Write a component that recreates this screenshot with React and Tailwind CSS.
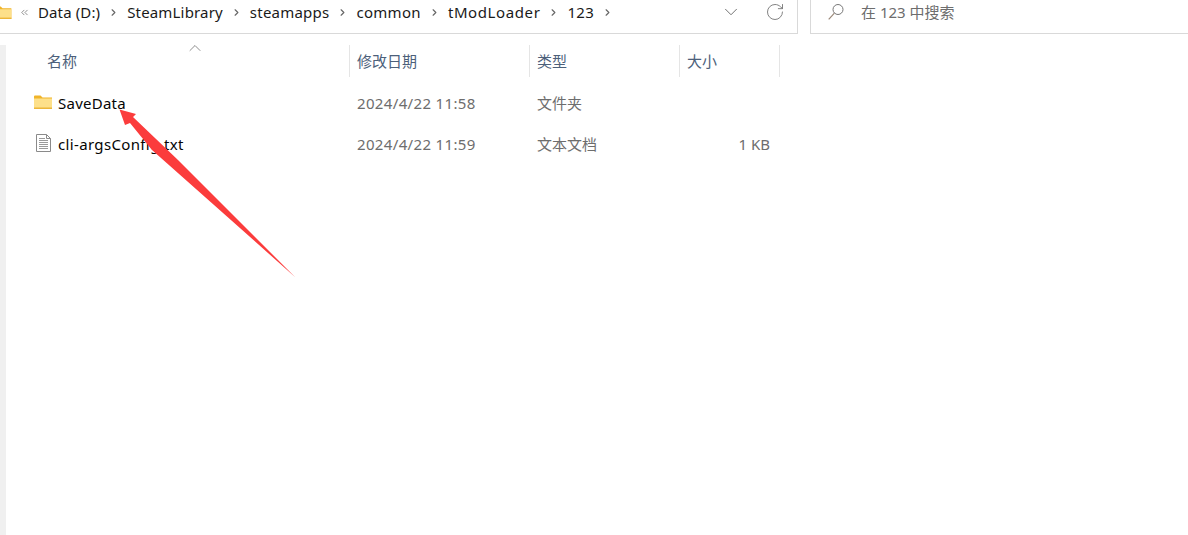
import { ChevronDown, ChevronRight, ChevronUp, ChevronsLeft, RotateCw } from 'lucide-react';

const font = 'font-["Noto_Sans","Noto_Sans_CJK_SC",sans-serif]';
const crumbs = [
  { label: 'Data (D:)', cls: 'tracking-[0.12px]' },
  { label: 'SteamLibrary', cls: 'tracking-[0.17px]' },
  { label: 'steamapps', cls: 'tracking-[0.22px]' },
  { label: 'common', cls: 'tracking-[0.3px]' },
  { label: 'tModLoader', cls: 'tracking-[0.6px]' },
  { label: '123', cls: 'tracking-[0.3px]' },
];

function FolderIcon({ className }) {
  return (
    <svg className={className} viewBox="0 0 18 14">
      <path d="M0 1.5 Q0 0.5 1 0.5 H6.5 L8.5 2.5 H18 V14 H0 Z" fill="#f0b429" />
      <rect x="0" y="3.5" width="18" height="10.5" fill="#fde08a" />
      <rect x="0" y="12.5" width="18" height="1.5" fill="#ecb63a" />
    </svg>
  );
}

function FileIcon({ className }) {
  return (
    <svg className={className} viewBox="0 0 15 18" fill="none">
      <path d="M0.5 0.5 H10.5 L14.5 4.5 V17.5 H0.5 Z" fill="#fff" stroke="#8a8a8a" />
      <path d="M10.5 0.5 V4.5 H14.5" stroke="#8a8a8a" />
      <path d="M3 4.5 H9 M3 6.5 H12 M3 8.5 H12 M3 10.5 H12 M3 12.5 H12 M3 14.5 H12" stroke="#9a9a9a" />
    </svg>
  );
}

function SearchIcon({ className }) {
  return (
    <svg className={className} viewBox="0 0 16 16" fill="none" stroke="#777" strokeWidth="1">
      <circle cx="10" cy="5.5" r="5" />
      <path d="M6.4 9.2 L0.7 15.3" stroke="#9a8878" strokeWidth="1.2" />
    </svg>
  );
}

function Row({ icon, name, nameCls, date, type, size }) {
  return (
    <div className="grid h-[41px] grid-cols-[342px_180px_150px_101px] items-center text-[15px] text-[#6d6d6d]">
      <div className="flex items-center pl-[27px]">
        {icon}
        <span className={`text-[#050505] ${nameCls}`}>{name}</span>
      </div>
      <span className="pl-[8px] tracking-[0.35px]">{date}</span>
      <span className="pl-[8px]">{type}</span>
      <span className="pr-[10px] text-right">{size}</span>
    </div>
  );
}

export default function App() {
  return (
    <div className={`relative flex h-[535px] w-[1188px] flex-col overflow-hidden bg-white ${font}`}>
      {/* barra de direccion y busqueda */}
      <div className="flex h-[34px] shrink-0 gap-[12px]">
        <div className="flex w-[798px] items-center border-r border-b border-[#d9d9d9] pb-[9px] text-[15px] text-[#1a1a1a]">
          <FolderIcon className="ml-[-6px] h-[13px] w-[18px]" />
          <ChevronsLeft className="ml-[7px] h-[11px] w-[11px] text-[#777]" strokeWidth={1.75} />
          <div className="ml-[8px] flex items-center gap-[8px]">
            {crumbs.map((c) => (
              <div key={c.label} className="flex items-center gap-[8px]">
                <span className={c.cls}>{c.label}</span>
                <ChevronRight className="h-[11px] w-[11px] text-[#666]" strokeWidth={2.5} />
              </div>
            ))}
          </div>
          <ChevronDown className="mr-[-1px] ml-auto h-[22px] w-[22px] text-[#666]" strokeWidth={1} />
          <RotateCw className="mr-[12px] ml-[24px] h-[20px] w-[20px] text-[#777]" strokeWidth={1.1} />
        </div>
        <div className="flex flex-1 items-center border-b border-l border-[#d9d9d9] pb-[9px] pl-[17px] text-[15px] text-[#6d6d6d]">
          <SearchIcon className="h-[16px] w-[16px]" />
          <span className="ml-[17px]">在 123 中搜索</span>
        </div>
      </div>

      <div className="mt-[11px] flex flex-1">
        <div className="w-[6px] bg-[#f0f0f0]" />
        <div className="flex-1 pl-px">
          {/* encabezado de columnas */}
          <div className="relative grid h-[32px] grid-cols-[342px_180px_150px_101px] items-center text-[15px] text-[#4c607a]">
            <span className="pl-[40px]">名称</span>
            <span className="border-l border-[#e5e5e5] pl-[7px] leading-[32px]">修改日期</span>
            <span className="border-l border-[#e5e5e5] pl-[7px] leading-[32px]">类型</span>
            <span className="border-x border-[#e5e5e5] pl-[7px] leading-[32px]">大小</span>
            <ChevronUp className="absolute top-[-7px] left-[178px] h-[20px] w-[20px] text-[#777]" strokeWidth={1} />
          </div>
          <div className="mt-[6px]">
            <Row
              icon={<FolderIcon className="mt-[-3px] mr-[6px] h-[14px] w-[18px]" />}
              name="SaveData"
              nameCls="tracking-[0.25px]"
              date="2024/4/22 11:58"
              type="文件夹"
            />
            <Row
              icon={<FileIcon className="mt-[-3px] mr-[7px] ml-[2px] h-[18px] w-[15px]" />}
              name="cli-argsConfig.txt"
              nameCls="tracking-[0.35px]"
              date="2024/4/22 11:59"
              type="文本文档"
              size="1 KB"
            />
          </div>
        </div>
      </div>

      {/* flecha roja sobre la captura */}
      <svg className="pointer-events-none absolute top-0 left-0 h-[535px] w-[1188px]" viewBox="0 0 1188 535">
        <polygon points="119.5,109.5 136,114 133,117 178,160 295,277 152,150 130,123 125,125" fill="#fb3c3c" />
      </svg>
    </div>
  );
}
